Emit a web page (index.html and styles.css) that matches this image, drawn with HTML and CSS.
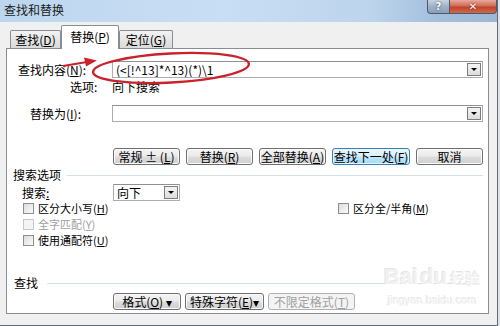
FILE: index.html
```html
<!DOCTYPE html>
<html lang="zh-CN">
<head>
    <meta charset="UTF-8">
    <title>查找和替换</title>
    <link rel="stylesheet" href="styles.css">
</head>
<body>
    <div class="window">
        <div class="titlebar">
            <span class="title">查找和替换</span>
            <div class="caption">
                <span class="cap-help">?</span>
                <span class="cap-close">✕</span>
            </div>
        </div>
        <div class="client">
            <div class="tabs">
                <span class="tab">查找(<u>D</u>)</span>
                <span class="tab active">替换(<u>P</u>)</span>
                <span class="tab">定位(<u>G</u>)</span>
            </div>
            <div class="panel">
                <div class="row field">
                    <span class="lbl lbl-find">查找内容(<u>N</u>):</span>
                    <div class="combo">
                        <span class="combo-text">(&lt;[!^13]*^13)(*)\1</span>
                        <span class="drop"></span>
                    </div>
                </div>
                <div class="row opts">
                    <span class="lbl lbl-opt">选项:</span>
                    <span>向下搜索</span>
                </div>
                <div class="row field replace">
                    <span class="lbl lbl-rep">替换为(<u>I</u>):</span>
                    <div class="combo">
                        <span class="combo-text"></span>
                        <span class="drop"></span>
                    </div>
                </div>
                <div class="btn-row">
                    <button class="btn">常规 ± (<u>L</u>)</button>
                    <button class="btn">替换(<u>R</u>)</button>
                    <button class="btn">全部替换(<u>A</u>)</button>
                    <button class="btn focus wide">查找下一处(<u>F</u>)</button>
                    <button class="btn">取消</button>
                </div>
                <div class="group-head">
                    <span>搜索选项</span>
                    <i class="rule"></i>
                </div>
                <div class="row search-row">
                    <span class="lbl lbl-search">搜索<u>:</u></span>
                    <div class="select">
                        <span class="combo-text">向下</span>
                        <span class="drop"></span>
                    </div>
                </div>
                <div class="checks">
                    <div class="check-row">
                        <span class="check"><i class="box"></i>区分大小写(<u>H</u>)</span>
                        <span class="check"><i class="box"></i>区分全/半角(<u>M</u>)</span>
                    </div>
                    <div class="check-row">
                        <span class="check disabled"><i class="box"></i>全字匹配(<u>Y</u>)</span>
                    </div>
                    <div class="check-row">
                        <span class="check"><i class="box"></i>使用通配符(<u>U</u>)</span>
                    </div>
                </div>
                <div class="group-head find-head">
                    <span>查找</span>
                    <i class="rule"></i>
                </div>
                <div class="btn-row bottom">
                    <button class="btn b-format">格式(<u>O</u>) ▾</button>
                    <button class="btn b-special">特殊字符(<u>E</u>)▾</button>
                    <button class="btn b-none" disabled>不限定格式(<u>T</u>)</button>
                </div>
            </div>
        </div>

        <div class="watermark">
            <div class="wm-logo">Bai<span class="wm-du">du</span><span class="wm-cn">经验</span></div>
            <div class="wm-url">jingyan.baidu.com</div>
        </div>

        <!-- 红色标注 -->
        <svg class="markup" width="500" height="326" viewBox="0 0 500 326">
            <ellipse cx="171" cy="68" rx="78" ry="14.5" transform="rotate(-3 171 68)" fill="none" stroke="#c9222b" stroke-width="2.4"/>
            <line x1="63" y1="66" x2="87" y2="62" stroke="#c9222b" stroke-width="2"/>
            <polygon points="84,57.5 97,60.5 86,66.5" fill="#c9222b"/>
        </svg>
    </div>
</body>
</html>
```

FILE: styles.css
```css
body {
    margin: 0;
    width: 500px;
    height: 326px;
    overflow: hidden;
    background: #dfe3e8;
    font-family: "Noto Sans CJK SC", "Noto Sans", sans-serif;
    font-size: 12px;
    color: #000;
}
u {
    text-decoration: underline;
    text-underline-offset: 1px;
}
.window {
    position: relative;
    width: 497px;
    height: 325px;
    border-right: 1px solid #5d6b7a;
    border-bottom: 1px solid #5d6b7a;
    display: flex;
    flex-direction: column;
}
.titlebar {
    height: 22px;
    flex: none;
    display: flex;
    align-items: flex-start;
    justify-content: space-between;
    background: linear-gradient(to right, #bdd6ef 0%, #c8def4 45%, #bcd4ec 75%, #a3bfdd 88%, #9db8d6 100%);
}
.title {
    padding-left: 4px;
    line-height: 20px;
    color: #1a1a1a;
}
.caption {
    display: flex;
}
.cap-help,
.cap-close {
    height: 14px;
    line-height: 13px;
    text-align: center;
    color: #fff;
    font-family: "DejaVu Sans", sans-serif;
    font-weight: bold;
    border: 1px solid #4b5a6b;
    border-top: none;
    box-sizing: border-box;
}
.cap-help {
    width: 22px;
    font-size: 10px;
    border-radius: 0 0 0 4px;
    border-right: none;
    background: linear-gradient(#c7d3e1, #9fb1c6 50%, #8aa0b9);
    text-shadow: 0 0 2px #334;
}
.cap-close {
    width: 48px;
    font-size: 10px;
    border-radius: 0 0 4px 0;
    background: linear-gradient(#e6aa9d, #d06c56 45%, #c2432c 55%, #cf6a4c);
    text-shadow: 0 0 2px #5a1a10;
}
.client {
    flex: 1;
    background: #f0f0f0;
    padding: 0 8px 0 6px;
}
.tabs {
    height: 26px;
    display: flex;
    align-items: flex-end;
    padding-left: 4px;
}
.tab {
    height: 18px;
    line-height: 17px;
    box-sizing: border-box;
    text-align: center;
    border: 1px solid #898c95;
    border-bottom: none;
    border-radius: 2px 2px 0 0;
    background: linear-gradient(#f3f3f3, #e6e6e6 50%, #dadada);
}
.tab:nth-child(1) {
    width: 51px;
}
.tab:nth-child(3) {
    width: 54px;
}
.tab.active {
    width: 58px;
    height: 24px;
    line-height: 22px;
    margin-bottom: -1px;
    background: #fff;
    position: relative;
    z-index: 1;
}
.panel {
    height: 266px;
    box-sizing: border-box;
    border: 1px solid #898c95;
    background: #fff;
    padding: 12px 5px 0 0;
}
.row {
    display: flex;
    align-items: center;
}
.field {
    height: 17px;
}
.lbl {
    width: 105px;
    flex: none;
    box-sizing: border-box;
    white-space: nowrap;
}
.lbl-find { padding-left: 11px; }
.lbl-opt { padding-left: 63px; }
.lbl-rep { padding-left: 23px; }
.lbl-search { padding-left: 15px; width: 106px; }
.opts {
    height: 14px;
    margin-top: 1px;
}
.replace {
    margin-top: 12px;
}
.combo,
.select {
    height: 17px;
    box-sizing: border-box;
    border: 1px solid #abadb3;
    border-top-color: #8e9097;
    display: flex;
    align-items: center;
    background: #fff;
}
.combo {
    flex: 1;
}
.combo-text {
    flex: 1;
    padding-left: 3px;
    line-height: 14px;
    white-space: nowrap;
}
.drop {
    width: 14px;
    height: 13px;
    margin-right: 1px;
    box-sizing: border-box;
    border: 1px solid #7d7d7d;
    background: linear-gradient(#f4f4f4, #dcdcdc);
    position: relative;
}
.drop::after {
    content: "";
    position: absolute;
    left: 3px;
    top: 4px;
    border-left: 3px solid transparent;
    border-right: 3px solid transparent;
    border-top: 3px solid #000;
}
.btn-row {
    display: flex;
    gap: 6px;
    padding-left: 106px;
    margin-top: 26px;
}
.btn {
    width: 67px;
    height: 17px;
    padding: 0;
    font: inherit;
    line-height: 14px;
    color: #000;
    border: 1px solid #707070;
    border-radius: 3px;
    background: linear-gradient(#f4f4f4 0%, #ebebeb 48%, #dddddd 52%, #cfcfcf 100%);
    box-shadow: inset 0 0 0 1px #fbfbfb;
    white-space: nowrap;
}
.btn.wide {
    width: 78px;
}
.btn.focus {
    border-color: #3c7fb1;
    background: linear-gradient(#eaf6fd 0%, #d9f0fc 48%, #bee6fd 52%, #a7d9f5 100%);
    box-shadow: inset 0 0 0 1px #e6f6ff;
}
.btn:disabled {
    color: #a0a0a0;
    border-color: #adb2b5;
    background: #f4f4f4;
    box-shadow: none;
}
.group-head {
    height: 14px;
    margin-top: 3px;
    display: flex;
    align-items: center;
    padding-left: 6px;
    line-height: 14px;
}
.rule {
    flex: 1;
    height: 1px;
    margin-left: 6px;
    background: #d5dfe5;
}
.search-row {
    margin-top: 2px;
}
.select {
    width: 67px;
}
.checks {
    padding-left: 16px;
    margin-top: -1px;
    font-size: 11px;
}
.check-row {
    height: 16px;
    display: grid;
    grid-template-columns: 315px auto;
    align-items: center;
}
.check {
    display: flex;
    align-items: center;
    line-height: 14px;
}
.box {
    width: 11px;
    height: 11px;
    box-sizing: border-box;
    margin-right: 4px;
    border: 1px solid #8f8f8f;
    background: linear-gradient(135deg, #dcdcdc, #fbfbfb);
}
.check.disabled {
    color: #a0a0a0;
}
.check.disabled .box {
    border-color: #c8c8c8;
    background: #f4f4f4;
}
.find-head {
    margin-top: 28px;
    padding-left: 7px;
}
.find-head .rule {
    margin-left: 9px;
    margin-right: 3px;
}
.btn-row.bottom {
    gap: 4px;
    margin-top: 3px;
}
.b-format { width: 68px; }
.b-special { width: 79px; }
.b-none { width: 87px; }
.watermark {
    position: absolute;
    left: 384px;
    top: 264px;
    color: #f1f1f1;
    text-shadow: 1px 1px 0 #fff, -1px -1px 0 #e4e4e4;
    font-family: "Liberation Sans", sans-serif;
}
.wm-logo {
    font-size: 22px;
    font-weight: bold;
    line-height: 26px;
}
.wm-du {
    margin-left: 2px;
}
.wm-cn {
    font-family: "Noto Sans CJK SC", sans-serif;
    font-size: 15px;
    font-weight: normal;
    margin-left: 3px;
}
.wm-url {
    font-size: 11px;
    line-height: 14px;
    margin-top: 2px;
    padding-left: 4px;
}
.markup {
    position: absolute;
    left: 0;
    top: 0;
    pointer-events: none;
}
```
